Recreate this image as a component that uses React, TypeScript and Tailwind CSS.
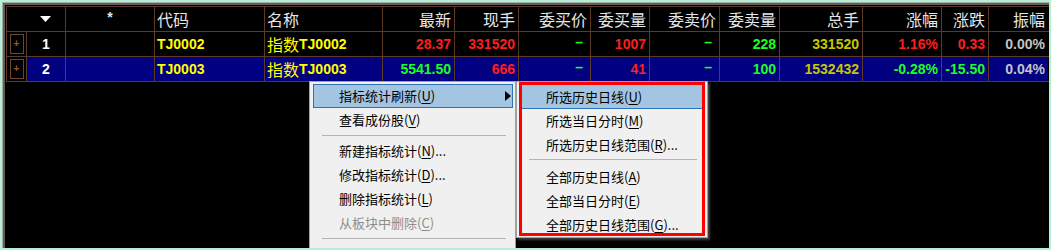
import React from 'react';

const GRID = 'border-[#5c3a26]';
const widths = [20, 39, 89, 110, 118, 72, 64, 72, 59, 70, 60, 83, 79, 47, 59];

const headers = ['', '', '*', '代码', '名称', '最新', '现手', '委买价', '委买量', '委卖价', '委卖量', '总手', '涨幅', '涨跌', '振幅'];

const RED = 'text-[#ff1e1e]';
const GREEN = 'text-[#1eff1e]';
const OLIVE = 'text-[#c8c800]';
const GRAY = 'text-[#c4c4c4]';

type Val = { t: string; c: string; dash?: boolean };

const rows: { no: string; code: string; bg: string; vals: Val[] }[] = [
    {
        no: '1',
        code: 'TJ0002',
        bg: 'bg-black',
        vals: [
            { t: '28.37', c: RED },
            { t: '331520', c: RED },
            { t: '–', c: GREEN, dash: true },
            { t: '1007', c: RED },
            { t: '–', c: GREEN, dash: true },
            { t: '228', c: GREEN },
            { t: '331520', c: OLIVE },
            { t: '1.16%', c: RED },
            { t: '0.33', c: RED },
            { t: '0.00%', c: GRAY },
        ],
    },
    {
        no: '2',
        code: 'TJ0003',
        bg: 'bg-[#000080]',
        vals: [
            { t: '5541.50', c: GREEN },
            { t: '666', c: RED },
            { t: '–', c: GREEN, dash: true },
            { t: '41', c: RED },
            { t: '–', c: GREEN, dash: true },
            { t: '100', c: GREEN },
            { t: '1532432', c: OLIVE },
            { t: '-0.28%', c: GREEN },
            { t: '-15.50', c: GREEN },
            { t: '0.04%', c: GRAY },
        ],
    },
];

const Mn: React.FC<{ k: string }> = ({ k }) => (
    <>
        (<span className="underline underline-offset-2">{k}</span>)
    </>
);

const MenuItem: React.FC<{ label: string; k: string; dots?: boolean; active?: boolean; disabled?: boolean; arrow?: boolean; pl: string; activeCls?: string }> = ({ label, k, dots, active, disabled, arrow, pl, activeCls }) => (
    <div
        className={`flex items-center justify-between h-[24px] ${pl} ${active ? activeCls : 'border border-transparent'} ${disabled ? 'text-[#8d8d8d]' : 'text-black'}`}
    >
        <span>
            {label}
            <Mn k={k} />
            {dots ? '...' : ''}
        </span>
        {arrow && (
            <svg width="6" height="10" viewBox="0 0 6 10" className="mr-[1px]">
                <polygon points="0,0 6,5 0,10" fill="#000" />
            </svg>
        )}
    </div>
);

const App: React.FC = () => {
    return (
        <div className="w-[1051px] h-[250px] bg-[#b4f0d2] p-[2px] overflow-hidden">
            <div className="relative h-full border-t border-l border-[#a8a8a8] overflow-hidden">
                <div className="h-full border-t-2 border-l-2 border-[#5e5e5e] bg-black pl-[1px] pt-[1px]">
                    {/* header */}
                    <div className={`flex h-[26px] border-y border-l ${GRID} font-['Noto_Sans_CJK_SC',sans-serif] text-[16px] text-[#e6e6e6]`}>
                        {headers.map((h, i) => {
                            const align = i === 3 || i === 4 ? 'justify-start pl-[2px]' : i <= 2 ? 'justify-center' : 'justify-end pr-[3px]';
                            const br = i === 0 || i === 14 ? '' : `border-r ${GRID}`;
                            return (
                                <div key={i} style={{ width: widths[i] }} className={`flex items-center shrink-0 ${align} ${br}`}>
                                    {i === 1 ? (
                                        <svg width="11" height="6" viewBox="0 0 11 6" className="mr-[1px]">
                                            <polygon points="0,0 11,0 5.5,6" fill="#fff" />
                                        </svg>
                                    ) : i === 2 ? (
                                        <span className="font-['Liberation_Sans',sans-serif] font-bold text-[14px] -mt-[4px]">{h}</span>
                                    ) : (
                                        h
                                    )}
                                </div>
                            );
                        })}
                    </div>
                    {rows.map((r) => (
                        <div key={r.no} className={`flex h-[25px] border-b border-l ${GRID} font-['Liberation_Sans',sans-serif] font-bold text-[14px]`}>
                            <div style={{ width: widths[0] }} className={`flex items-center justify-center shrink-0 bg-black border-r ${GRID}`}>
                                <div className="w-[14px] h-[20px] border border-[#6e4630] flex items-center justify-center text-[10px] leading-none text-[#8a5a40]">+</div>
                            </div>
                            <div style={{ width: widths[1] }} className={`flex items-center justify-center shrink-0 ${r.bg} border-r ${GRID} text-white`}>
                                {r.no}
                            </div>
                            <div style={{ width: widths[2] }} className={`shrink-0 ${r.bg} border-r ${GRID}`} />
                            <div style={{ width: widths[3] }} className={`flex items-center shrink-0 pl-[2px] ${r.bg} border-r ${GRID} text-[#ffff00]`}>
                                {r.code}
                            </div>
                            <div style={{ width: widths[4] }} className={`flex items-center shrink-0 pl-[2px] ${r.bg} border-r ${GRID} text-[#ffff00]`}>
                                <span className="font-['Noto_Sans_CJK_SC',sans-serif] font-normal text-[16px]">指数</span>
                                {r.code}
                            </div>
                            {r.vals.map((v, j) => {
                                const i = j + 5;
                                return (
                                    <div
                                        key={i}
                                        style={{ width: widths[i] }}
                                        className={`flex items-center justify-end shrink-0 ${v.dash ? 'pr-[7px] pb-[3px]' : 'pr-[3px]'} ${r.bg} ${i === 14 ? '' : `border-r ${GRID}`} ${v.c}`}
                                    >
                                        {v.t}
                                    </div>
                                );
                            })}
                        </div>
                    ))}
                </div>

                {/* context menu */}
                <div className="absolute left-[306px] top-[78px] w-[207px] h-[200px] bg-[#f0f0f0] border border-[#a0a0a0] pt-[2px] pl-[3px] pr-[2px] font-['Noto_Sans_CJK_SC',sans-serif] text-[13px]">
                    <MenuItem label="指标统计刷新" k="U" active arrow pl="pl-[25px]" activeCls="bg-[#a4c5e2] border border-[#2e72b6]" />
                    <MenuItem label="查看成份股" k="V" pl="pl-[25px]" />
                    <div className="h-[7px] pt-[3px] pl-[9px] pr-[7px]">
                        <div className="h-px bg-[#b4b4b4]" />
                    </div>
                    <MenuItem label="新建指标统计" k="N" dots pl="pl-[25px]" />
                    <MenuItem label="修改指标统计" k="D" dots pl="pl-[25px]" />
                    <MenuItem label="删除指标统计" k="L" pl="pl-[25px]" />
                    <MenuItem label="从板块中删除" k="C" disabled pl="pl-[25px]" />
                    <div className="h-[7px] pt-[3px] pl-[9px] pr-[7px]">
                        <div className="h-px bg-[#b4b4b4]" />
                    </div>
                </div>

                {/* submenu */}
                <div className="absolute left-[513px] top-[78px] w-[192px] h-[157px] bg-[#f0f0f0] border border-[#a0a0a0] shadow-[2px_2px_2px_rgba(80,80,80,0.8)] pt-[3px] pl-[5px] pr-[3px] font-['Noto_Sans_CJK_SC',sans-serif] text-[13px]">
                    <MenuItem label="所选历史日线" k="U" active pl="pl-[24px]" activeCls="bg-[#a4c5e2] border-b border-[#2e72b6]" />
                    <MenuItem label="所选当日分时" k="M" pl="pl-[23px]" />
                    <MenuItem label="所选历史日线范围" k="R" dots pl="pl-[23px]" />
                    <div className="h-[8px] pt-[2px] pl-[7px] pr-[7px]">
                        <div className="h-px bg-[#b4b4b4]" />
                    </div>
                    <MenuItem label="全部历史日线" k="A" pl="pl-[23px]" />
                    <MenuItem label="全部当日分时" k="E" pl="pl-[23px]" />
                    <MenuItem label="全部历史日线范围" k="G" dots pl="pl-[23px]" />
                    <div className="absolute left-[2px] top-0 w-[186px] h-[154px] border-[3px] border-[#ff0000] pointer-events-none" />
                </div>
            </div>
        </div>
    );
};

export default App;
